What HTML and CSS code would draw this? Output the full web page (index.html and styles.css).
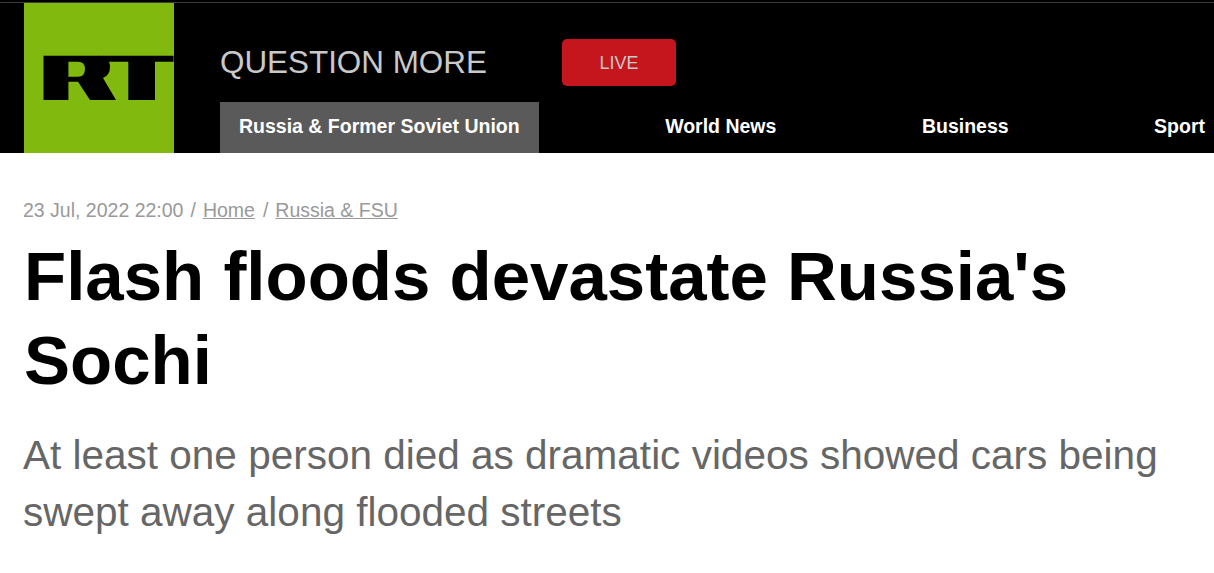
FILE: index.html
```html
<html>
  <head>
    <title>Flash floods devastate Russia's Sochi</title>
    <link rel="stylesheet" href="styles.css">
  </head>
  <body>
    <header class="header">
      <a class="logo" href="#">
        <svg width="150" height="150" viewBox="24 3 150 150">
          <path fill-rule="evenodd" d="M43.500 55.700H98Q110 57 110 67Q110 75 103 78L116 100H90L78 81.700H68.400V100H43.500ZM68.400 61.700V76.700H78Q85 76.700 85 69Q85 61.700 78 61.700Z"/>
          <path d="M98 55.700H173.500V61.700H155V100H128.300V61.700H98Z"/>
        </svg>
      </a>
      <div class="header-main">
        <div class="header-top">
          <span class="slogan">QUESTION MORE</span>
          <a class="live" href="#">LIVE</a>
        </div>
        <nav class="nav">
          <a class="nav-item active" href="#">Russia &amp; Former Soviet Union</a>
          <a class="nav-item" href="#">World News</a>
          <a class="nav-item" href="#">Business</a>
          <a class="nav-item" href="#">Sport</a>
        </nav>
      </div>
    </header>

    <main class="article">
      <div class="meta">
        <span>23 Jul, 2022 22:00</span>
        <span class="sep">/</span>
        <a href="#">Home</a>
        <span class="sep">/</span>
        <a href="#">Russia &amp; FSU</a>
      </div>
      <h1 class="title">Flash floods devastate Russia's Sochi</h1>
      <p class="summary">At least one person died as dramatic videos showed cars being swept away along flooded streets</p>
    </main>
  </body>
</html>
```

FILE: styles.css
```css
html,
body {
  margin: 0;
  padding: 0;
  background: #fff;
  overflow: hidden;
  font-family: "Liberation Sans", Arial, sans-serif;
}

a {
  color: inherit;
}

.header {
  display: flex;
  height: 150px;
  padding: 3px 0 0 24px;
  background: linear-gradient(to bottom, #000 2px, #3c3c3c 2px, #3c3c3c 3px, #000 3px);
}

.logo {
  display: block;
  flex: none;
  width: 150px;
  height: 150px;
  background: #82b90e;
}

.logo svg {
  display: block;
}

.header-main {
  flex: 1;
  min-width: 0;
  padding-left: 46px;
}

.header-top {
  display: flex;
  align-items: center;
  height: 99px;
  padding-top: 20px;
  box-sizing: border-box;
}

.slogan {
  width: 342px;
  color: #c9c9c9;
  font-size: 31.400px;
}

.live {
  width: 114px;
  height: 47px;
  line-height: 49px;
  border-radius: 5px;
  background: #c4161c;
  color: #c9c9c9;
  font-size: 18px;
  text-align: center;
  text-decoration: none;
}

.nav {
  display: flex;
  height: 51px;
  white-space: nowrap;
}

.nav-item {
  padding: 0 19px;
  margin-right: 107.500px;
  color: #fff;
  font-size: 19.500px;
  font-weight: bold;
  line-height: 49px;
  text-decoration: none;
}

.nav-item.active {
  background: #5a5a5a;
}

.article {
  padding: 44px 24px 0 23px;
}

.meta {
  display: flex;
  gap: 7px;
  color: #999;
  font-size: 19.500px;
  line-height: 26px;
}

.meta a {
  margin-right: 1px;
}

.title {
  margin: 12px 0 0 1px;
  color: #000;
  font-size: 69px;
  font-weight: bold;
  line-height: 84px;
}

.summary {
  margin: 24px 0 0;
  color: #666;
  font-size: 40.500px;
  line-height: 57px;
}
```
